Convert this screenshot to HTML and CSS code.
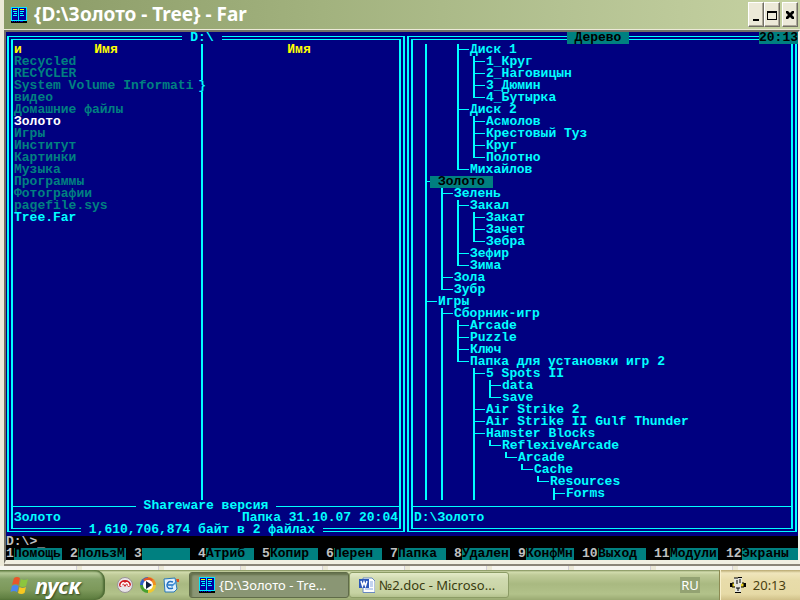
FILE: index.html
```html
<!DOCTYPE html>
<html lang="ru">
<head>
  <meta charset="UTF-8" />
  <title>{D:\Золото - Tree} - Far</title>
  <link rel="stylesheet" href="styles.css">
</head>
<body>

  <svg class="symbols" width="0" height="0" aria-hidden="true">
    <symbol id="far" viewBox="0 0 16 16">
      <rect width="16" height="16" fill="#00e8ff"/>
      <rect x="1" y="1" width="14" height="12" fill="#0000a0"/>
      <rect x="7" y="0" width="1" height="14" fill="#00e8ff"/>
      <path d="M2 2h4v1h-4zM9 2h4v1h-4z" fill="#ffff00"/>
      <path d="M2 4h4v1h-4zM3 6h3v1h-3zM2 8h4v1h-4zM9 4h4v1h-4zM9 6h3v1h-3zM9 8h4v1h-4z" fill="#00ffff"/>
      <rect y="14" width="16" height="2" fill="#000"/>
      <path d="M1 14h1v1h-1zM3 14h1v1h-1zM5 14h1v1h-1zM7 14h1v1h-1zM9 14h3v1h-3z" fill="#0000c0"/>
    </symbol>
  </svg>

  <div class="window">
    <header class="titlebar">
      <svg class="app-icon"><use href="#far"/></svg>
      <h1>{D:\Золото - Tree} - Far</h1>
      <div class="window-buttons">
        <button type="button" aria-label="Свернуть"><svg width="10" height="12"><path d="M2 10h6v2h-6z"/></svg></button>
        <button type="button" aria-label="Развернуть"><svg width="10" height="12"><path d="M0 2h10v9h-10zM1 4v6h8v-6z" fill-rule="evenodd"/></svg></button>
        <button type="button" class="close" aria-label="Закрыть"><svg width="10" height="12"><path d="M1 2h2l2 2l2-2h2v2l-2 2l2 2v2h-2l-2-2l-2 2h-2v-2l2-2l-2-2z"/></svg></button>
      </div>
    </header>

    <main class="console">
      <div class="panels">

        <section class="panel panel-files">
          <h2 class="panel-title"><span>D:\</span></h2>
          <div class="frame">
            <div class="columns">
              <div class="column">
                <div class="column-head"><span>и</span><span>Имя</span></div>
                <ul class="files">
                  <li>Recycled</li>
                  <li>RECYCLER</li>
                  <li class="cut">System Volume Informati<span>}</span></li>
                  <li>видео</li>
                  <li>Домашние файлы</li>
                  <li class="bright">Золото</li>
                  <li>Игры</li>
                  <li>Институт</li>
                  <li>Картинки</li>
                  <li>Музыка</li>
                  <li>Программы</li>
                  <li>Фотографии</li>
                  <li>pagefile.sys</li>
                  <li class="normal">Tree.Far</li>
                </ul>
              </div>
              <div class="column">
                <div class="column-head"><span></span><span>Имя</span></div>
              </div>
            </div>
            <div class="divider"><span>Shareware версия</span></div>
            <div class="status"><span>Золото</span><span>Папка 31.10.07 20:04</span></div>
          </div>
          <div class="panel-total"><span>1,610,706,874 байт в 2 файлах</span></div>
        </section>

        <section class="panel panel-tree">
          <h2 class="panel-title active"><span>Дерево</span></h2>
          <div class="clock">20:13</div>
          <div class="frame">
            <ul class="tree">
              <li class="pass">
                <ul>
                  <li class="blank">
                    <ul>
                      <li>Диск 1
                        <ul>
                          <li>1_Круг</li>
                          <li>2_Наговицын</li>
                          <li>3_Дюмин</li>
                          <li class="end">4_Бутырка</li>
                        </ul>
                      </li>
                      <li>Диск 2
                        <ul>
                          <li>Асмолов</li>
                          <li>Крестовый Туз</li>
                          <li>Круг</li>
                          <li class="end">Полотно</li>
                        </ul>
                      </li>
                      <li class="end">Михайлов</li>
                    </ul>
                  </li>
                </ul>
              </li>
              <li><span class="current">Золото</span>
                <ul>
                  <li>Зелень
                    <ul>
                      <li>Закал
                        <ul>
                          <li>Закат</li>
                          <li>Зачет</li>
                          <li class="end">Зебра</li>
                        </ul>
                      </li>
                      <li>Зефир</li>
                      <li class="end">Зима</li>
                    </ul>
                  </li>
                  <li>Зола</li>
                  <li class="end">Зубр</li>
                </ul>
              </li>
              <li>Игры
                <ul>
                  <li>Сборник-игр
                    <ul>
                      <li>Arcade</li>
                      <li>Puzzle</li>
                      <li>Ключ</li>
                      <li class="end">Папка для установки игр 2
                        <ul>
                          <li>5 Spots II
                            <ul>
                              <li>data</li>
                              <li class="end">save</li>
                            </ul>
                          </li>
                          <li>Air Strike 2</li>
                          <li>Air Strike II Gulf Thunder</li>
                          <li>Hamster Blocks
                            <ul>
                              <li class="end">ReflexiveArcade
                                <ul>
                                  <li class="end">Arcade
                                    <ul>
                                      <li class="end">Cache
                                        <ul>
                                          <li class="end">Resources
                                            <ul>
                                              <li>Forms</li>
                                            </ul>
                                          </li>
                                        </ul>
                                      </li>
                                    </ul>
                                  </li>
                                </ul>
                              </li>
                            </ul>
                          </li>
                        </ul>
                      </li>
                    </ul>
                  </li>
                </ul>
              </li>
            </ul>
            <div class="divider"></div>
            <div class="status"><span>D:\Золото</span></div>
          </div>
        </section>
      </div>

      <div class="prompt">
        <label for="cmd">D:\&gt;</label><input type="text" id="cmd" value="_" autocomplete="off">
      </div>

      <nav class="keybar">
        <button type="button">1<span>Помощь</span></button>
        <button type="button">2<span>ПользM</span></button>
        <button type="button">3<span></span></button>
        <button type="button">4<span>Атриб</span></button>
        <button type="button">5<span>Копир</span></button>
        <button type="button">6<span>Перен</span></button>
        <button type="button">7<span>Папка</span></button>
        <button type="button">8<span>Удален</span></button>
        <button type="button">9<span>КонфMн</span></button>
        <button type="button" class="wide">10<span>Выход</span></button>
        <button type="button" class="wide">11<span>Модули</span></button>
        <button type="button" class="wide last">12<span>Экраны</span></button>
      </nav>
    </main>
  </div>

  <div class="behind"></div>

  <footer class="taskbar">
    <button type="button" class="start">
      <svg width="20" height="20" viewBox="0 0 20 20">
        <path d="M4 3q3-2 6 0l-1.500 7q-3-2-6.500 0z" fill="#e8562a"/>
        <path d="M11 4q3 2 7 0l-2 7q-3 2-6.500 0z" fill="#8cc63e"/>
        <path d="M2 11q3-2 6.500 0l-1.500 6q-3-2-6.500 0z" fill="#4a86f0"/>
        <path d="M9.500 12q3 2 6.500 0l-1.500 6q-3 2-6.500 0z" fill="#f8c820"/>
      </svg>
      <span>пуск</span>
    </button>

    <div class="quick">
      <a href="#" aria-label="Nero">
        <svg width="16" height="16" viewBox="0 0 16 16">
          <circle cx="8" cy="8" r="7.500" fill="#e8e4e8" stroke="#9a9298"/>
          <path d="M2 8a6 5 0 0 1 12 0q-1 2-3 2l-1-3l-2 3l-2-3l-2 3q-2 0-2-2z" fill="#d01820"/>
          <path d="M4 9q1-5 4-2q3-3 4 2" fill="none" stroke="#fff" stroke-width="1.500"/>
        </svg>
      </a>
      <a href="#" aria-label="Проигрыватель">
        <svg width="16" height="16" viewBox="0 0 16 16">
          <path d="M8 8V0a8 8 0 0 1 8 8z" fill="#f09020"/>
          <path d="M8 8h8a8 8 0 0 1-8 8z" fill="#f0c830"/>
          <path d="M8 8v8a8 8 0 0 1-8-8z" fill="#48a030"/>
          <path d="M8 8H0a8 8 0 0 1 8-8z" fill="#3060c8"/>
          <path d="M3 2.500A8 8 0 0 1 13 2.500L8 8z" fill="#e05828"/>
          <circle cx="8" cy="8" r="5" fill="#fff"/>
          <path d="M6 4l6 4l-6 4z" fill="#102040"/>
        </svg>
      </a>
      <a href="#" aria-label="Свернуть все окна">
        <svg width="16" height="16" viewBox="0 0 16 16">
          <path d="M1 2l11-1l2 11l-3 3H2z" fill="#dff0fc" stroke="#2878b8"/>
          <path d="M10 5q-5-2-6 3q0 5 6 3M5 8h5" fill="none" stroke="#2070c0" stroke-width="1.500"/>
          <path d="M8 9l6-6l1 1l-6 6z" fill="#3c90d8"/>
          <path d="M13 2h3v3h-2z" fill="#e05020"/>
        </svg>
      </a>
    </div>

    <button type="button" class="task pressed">
      <svg width="16" height="16"><use href="#far"/></svg>
      <span>{D:\Золото - Tre...</span>
    </button>
    <button type="button" class="task">
      <svg width="16" height="16" viewBox="0 0 16 16">
        <path d="M4 1h9l3 3v11.500H4z" fill="#fff" stroke="#6888c0"/>
        <path d="M11 5h3M11 7h3M11 9h3M6 12h8" stroke="#88a8e0"/>
        <rect x="0" y="2" width="10" height="9" fill="#2c58b8"/>
        <path d="M2 4l1.500 5l1.500-4l1.500 4l1.500-5" fill="none" stroke="#fff" stroke-width="1.500"/>
      </svg>
      <span>№2.doc - Microso...</span>
    </button>

    <div class="lang">RU</div>

    <div class="tray">
      <svg width="16" height="16" viewBox="0 0 16 16">
        <path d="M0 6h3v4H0zM13 6h3v4h-3z" fill="#000"/>
        <path d="M2 6h12v4H2z" fill="#e8d020" stroke="#000"/>
        <path d="M4 1h4v14H5V9H4zM8 0h4v7h-1v9H8z" fill="#e4e4dc"/>
        <path d="M4 1h4M8 .5h4M5 15.500h6M7 3v4M9 3h2M9 5h2M6 11h4M8 11v3" stroke="#000"/>
      </svg>
      <time>20:13</time>
    </div>
  </footer>

</body>
</html>
```
FILE: styles.css
```css
* {
  box-sizing: border-box;
}

body {
  margin: 0;
  background: #ece9d8;
  font-family: "Noto Sans", sans-serif;
}

h1,
h2,
ul {
  margin: 0;
  padding: 0;
  font: inherit;
}

ul {
  list-style: none;
}

button {
  padding: 0;
  border: none;
  background: none;
  color: inherit;
  font: inherit;
}

.symbols {
  display: block;
}

/* Window */
.window {
  margin-left: 4px;
}

.titlebar {
  display: flex;
  align-items: center;
  height: 29px;
  padding: 0 2px 0 7px;
  background: linear-gradient(90deg, #8a9a66, #a2b27e 40%, #b4c292 70%, #c6d2a2);
}

.app-icon {
  width: 16px;
  height: 16px;
}

.titlebar h1 {
  flex: 1;
  margin-left: 7px;
  color: #fff;
  font-size: 19px;
  font-weight: 700;
  line-height: 24px;
  padding-bottom: 2px;
}

.window-buttons {
  display: flex;
}

.window-buttons button {
  display: flex;
  align-items: center;
  justify-content: center;
  width: 16px;
  height: 25px;
  background: #ece9d8;
  border: 1px solid;
  border-color: #fff #716f64 #716f64 #fff;
  box-shadow: inset -1px -1px #aca899;
}

.window-buttons .close {
  margin-left: 2px;
}

/* Console */
.console {
  border: solid #716f64;
  border-width: 2px 0 0 2px;
  border-right: 2px solid #f4f2e8;
  border-bottom: 4px solid #f1efe2;
  box-shadow: 0 2px #8a8478;
  margin-top: 1px;
  background: #000;
  color: #c0c0c0;
  font: bold 13px/12px "Liberation Mono", monospace;
  white-space: nowrap;
}

.panels {
  display: flex;
  background: #000080;
  color: #0ff;
}

.panel {
  position: relative;
  display: flex;
  padding: 4px 1px;
}

.panel-files {
  flex: 50 1 0;
}

.panel-tree {
  flex: 49 1 0;
}

/* Double frame: outer line on ::before, inner line on .frame */
.panel::before {
  content: "";
  position: absolute;
  inset: 4px 1px;
  border: solid #0ff;
  border-width: 1px 2px;
}

.frame {
  flex: 1;
  display: flex;
  flex-direction: column;
  margin: 3px 4px;
  padding: 4px 0;
  border: solid #0ff;
  border-width: 1px 2px;
}

.panel-title,
.panel-total {
  position: absolute;
  left: 0;
  right: 8px;
  text-align: center;
}

.panel-title {
  top: 0;
}

.panel-total {
  bottom: 0;
}

.panel-title span,
.panel-total span {
  display: inline-block;
  padding: 0 8px;
  background: #000080;
}

.panel-title.active span {
  background: #008080;
  color: #000;
}

.clock {
  position: absolute;
  top: 0;
  right: 0;
  background: #008080;
  color: #000;
}

.columns {
  flex: 1;
  display: flex;
}

.column {
  flex: 186 1 0;
  padding: 0 7px 0 3px;
}

.column:first-child {
  flex: 184 1 0;
  padding: 0 3px 0 1px;
  border-right: 2px solid #0ff;
}

.column-head {
  display: grid;
  grid-template-columns: 8px 1fr 8px;
  height: 12px;
  color: #ff0;
  text-align: center;
}

.files {
  color: #008080;
}

.files .bright {
  color: #fff;
}

.files .normal {
  color: #0ff;
}

.cut {
  position: relative;
}

.cut span {
  position: absolute;
  right: -8px;
  background: #000080;
  color: #0ff;
}

.divider {
  display: flex;
  align-items: center;
  gap: 8px;
  height: 12px;
}

.divider::before,
.divider::after {
  content: "";
  flex: 1;
  height: 1px;
  background: #0ff;
}

.divider:empty {
  gap: 0;
}

.status {
  display: flex;
  justify-content: space-between;
  padding: 0 1px;
}

/* Tree */
.tree {
  flex: 1;
  padding-left: 12px;
}

.tree ul {
  margin-left: 3px;
}

.tree li {
  padding-left: 13px;
  background-image: linear-gradient(#0ff, #0ff), linear-gradient(#0ff, #0ff);
  background-position: 0 0, 0 5px;
  background-size: 2px 100%, 12px 1px;
  background-repeat: no-repeat;
}

.tree .end {
  background-size: 2px 6px, 12px 1px;
}

.tree .pass {
  background-size: 2px 100%, 0 0;
}

.tree .blank {
  background-image: none;
}

.current {
  display: inline-block;
  margin-left: -8px;
  padding: 0 8px;
  background: #008080;
  color: #000;
}

/* Command line and function keys */
.prompt {
  display: flex;
  height: 12px;
}

.prompt input {
  flex: 1;
  height: 16px;
  margin: -2px 0;
  padding: 0;
  border: none;
  outline: none;
  background: none;
  color: inherit;
  font: inherit;
}

.keybar {
  display: flex;
  gap: 8px;
}

.keybar button {
  flex: 56 1 0;
  display: grid;
  grid-template-columns: 8px 1fr;
  height: 12px;
  text-align: left;
}

.keybar .wide {
  flex-grow: 64;
  grid-template-columns: 16px 1fr;
}

.keybar .last {
  flex-grow: 72;
}

.keybar span {
  background: #008080;
  color: #000;
}

/* Strip of the window that lies under the console */
.behind {
  height: 4px;
  margin-top: 2px;
  background: repeating-linear-gradient(90deg, #f6f5f0 0 76px, #d4d0d8 76px 77px, #ece9d8 77px 82px);
}

/* Taskbar */
.taskbar {
  display: flex;
  align-items: center;
  height: 30px;
  background: linear-gradient(#7d8d56, #d2dcae 2px, #bfcb98 5px, #a9b981 14px, #b2c28a 24px, #9aaa72);
  font-size: 13px;
}

.start {
  display: flex;
  align-items: center;
  gap: 5px;
  width: 105px;
  height: 30px;
  padding-left: 10px;
  border-radius: 0 10px 10px 0;
  background: linear-gradient(#5f7c40, #b4c896 3px, #86a268 9px, #7c985a 20px, #5a7a3c);
  box-shadow: inset -2px 0 2px #4d6a34;
  color: #fff;
  font-size: 22px;
  font-style: italic;
  font-weight: 700;
  line-height: 28px;
  text-shadow: 1px 1px 2px #33481f;
}

.quick {
  display: flex;
  gap: 7px;
  padding: 0 10px 0 12px;
}

.quick svg,
.task svg {
  display: block;
}

.task {
  display: flex;
  align-items: center;
  flex: 0 1 160px;
  gap: 4px;
  height: 26px;
  padding: 0 9px;
  border: 1px solid #8c9c66;
  border-radius: 3px;
  background: linear-gradient(#e4ebc8, #d0dab0 6px, #c6d2a2 20px, #b4c28e);
  color: #3a3c10;
  white-space: nowrap;
}

.task.pressed {
  border-color: #5f6b48;
  background: #8a9674;
  box-shadow: inset 2px 2px 2px #66724e;
  color: #fff;
}

.lang {
  margin-left: auto;
  margin-right: 19px;
  padding: 0 1px;
  background: #93a272;
  color: #fff;
  line-height: 16px;
}

.tray {
  display: flex;
  align-items: center;
  gap: 7px;
  height: 30px;
  padding: 0 14px 0 10px;
  border-left: 1px solid #8c8a52;
  box-shadow: inset 1px 0 #f8f0cc;
  background: linear-gradient(#b8a870, #f0e6bc 3px, #e8dcaa 10px, #e6daa6 24px, #d0c088);
  color: #4a4010;
}
```
